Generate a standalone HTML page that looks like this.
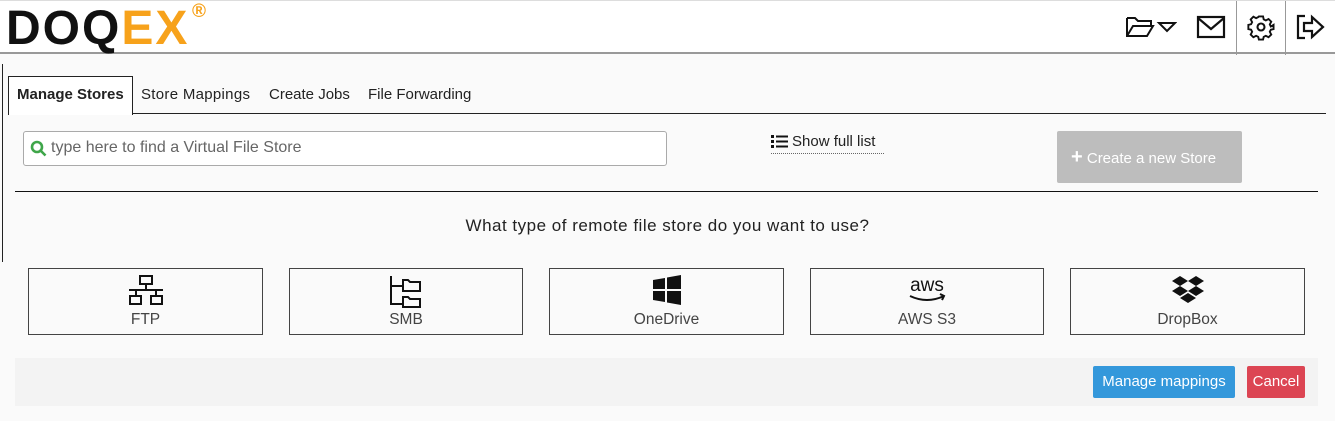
<!DOCTYPE html>
<html><head><style>
*{box-sizing:border-box;margin:0;padding:0}
body{width:1335px;height:421px;background:#fafafa;font-family:"Liberation Sans",sans-serif;color:#222;position:relative;overflow:hidden}
.hdr{position:absolute;left:0;top:0;width:1335px;height:54px;background:#fff;border-bottom:2px solid #999;border-top:1px solid #ddd}
.logo{position:absolute;left:6px;top:4px;font-weight:bold;font-size:48px;letter-spacing:2px;line-height:48px}
.abs{position:absolute}
.tab{position:absolute;top:86px;font-size:15px}
.card{position:absolute;top:268px;height:67px;border:1px solid #444;background:#fafafa;text-align:center;font-size:15.5px;color:#444}
.card span{position:absolute;left:0;right:0;top:42px}
.card svg{position:absolute;left:50%;transform:translateX(-50%);top:5px}
</style></head><body>
<div class="hdr">
 <div class="logo"><span style="color:#111">DOQ</span><span style="color:#f7a21b">EX</span></div>
 <div class="abs" style="left:192px;top:0px;color:#f7a21b;font-size:19px;font-weight:bold">®</div>
 <svg class="abs" style="left:1125px;top:13px" width="52" height="26" viewBox="0 0 52 26" fill="none" stroke="#111" stroke-width="2"><path d="M2 4h8l3 3h13v5M2 4v18h20l6-10H8L2 22"/><path d="M34 9h16l-8 8z" fill="none"/></svg>
 <svg class="abs" style="left:1196px;top:14px" width="30" height="24" viewBox="0 0 30 24" fill="none" stroke="#111" stroke-width="2.2"><rect x="2" y="2" width="26" height="20"/><path d="M2 3l13 11L28 3"/></svg>
 <div class="abs" style="left:1236px;top:0;width:50px;height:54px;border-left:1px solid #999;border-right:1px solid #999"></div>
 <svg class="abs" style="left:1247px;top:12px" width="28" height="28" viewBox="0 0 24 24" fill="none" stroke="#111" stroke-width="1.8"><circle cx="12" cy="12" r="3"/><path d="M10 2h4l.6 2.8 2 1 2.6-1.4 2.6 2.6-1.4 2.6 1 2L24 10v4l-2.6.6-1 2 1.4 2.6-2.6 2.6-2.6-1.4-2 1L14 24h-4l-.6-2.6-2-1-2.6 1.4-2.6-2.6 1.4-2.6-1-2L0 14v-4l2.6-.6 1-2-1.4-2.6 2.6-2.6 2.6 1.4 2-1z" transform="scale(.9) translate(1.3 1.3)"/></svg>
 <svg class="abs" style="left:1296px;top:13px" width="30" height="26" viewBox="0 0 30 26" fill="none" stroke="#111" stroke-width="2.2"><path d="M9 2H2v22h7"/><path d="M8 9h8V3l11 10-11 10v-6H8z"/></svg>
</div>
<div class="abs" style="left:2px;top:64px;width:1px;height:198px;background:#222"></div>
<div class="abs" style="left:8px;top:113px;width:1318px;height:1px;background:#222"></div>
<div class="abs" style="left:8px;top:76px;width:125px;height:39px;border:1px solid #222;border-bottom:none;background:#fff"></div>
<div class="tab" style="left:17px;font-weight:bold">Manage Stores</div>
<div class="tab" style="left:141px;letter-spacing:.3px">Store Mappings</div>
<div class="tab" style="left:269px">Create Jobs</div>
<div class="tab" style="left:368px">File Forwarding</div>
<div class="abs" style="left:23px;top:131px;width:644px;height:35px;border:1px solid #aaa;border-radius:3px;background:#fff"></div>
<svg class="abs" style="left:30px;top:140px" width="17" height="17" viewBox="0 0 17 17" fill="none" stroke="#3fa64a" stroke-width="2.6"><circle cx="7" cy="7" r="5"/><path d="M10.5 10.5l5 5"/></svg>
<div class="abs" style="left:51px;top:139px;font-size:16px;color:#666">type here to find a Virtual File Store</div>
<svg class="abs" style="left:771px;top:134px" width="18" height="14" viewBox="0 0 18 14" fill="#111"><rect x="0" y="1" width="3" height="3"/><rect x="0" y="6" width="3" height="3"/><rect x="0" y="11" width="3" height="3"/><rect x="5" y="1.5" width="12" height="2"/><rect x="5" y="6.5" width="12" height="2"/><rect x="5" y="11.5" width="12" height="2"/></svg>
<div class="abs" style="left:792px;top:133px;font-size:15px">Show full list</div>
<div class="abs" style="left:771px;top:153px;width:113px;border-top:1px dotted #666"></div>
<div class="abs" style="left:1057px;top:131px;width:185px;height:52px;background:#bdbdbd;border-radius:2px;color:#fff;font-size:15px;line-height:52px;padding-left:14px"><b style="font-size:20px">+</b> Create a new Store</div>
<div class="abs" style="left:15px;top:191px;width:1303px;height:1px;background:#111"></div>
<div class="abs" style="left:0;width:1335px;top:216px;text-align:center;font-size:17px;letter-spacing:.5px">What type of remote file store do you want to use?</div>
<div class="card" style="left:28px;width:235px"><svg width="40" height="32" viewBox="0 0 40 32" fill="none" stroke="#111" stroke-width="2"><rect x="14" y="2" width="12" height="8"/><path d="M20 10v6M3 16h34M10 16v6M30 16v6"/><rect x="4" y="22" width="11" height="8"/><rect x="25" y="22" width="11" height="8"/></svg><span>FTP</span></div>
<div class="card" style="left:289px;width:234px"><svg width="36" height="34" viewBox="0 0 36 34" fill="none" stroke="#111" stroke-width="2"><path d="M3 2v28h12M3 12h12"/><path d="M15 6h5l2 2h10v9H15z"/><path d="M15 23h5l2 2h10v8H15z"/></svg><span>SMB</span></div>
<div class="card" style="left:549px;width:235px"><svg width="32" height="32" viewBox="0 0 32 32" fill="#111"><path d="M2 6l12-2v11H2zM16 3.5L30 1v14H16zM2 17h12v11L2 26zM16 17h14v14l-14-2.5z"/></svg><span>OneDrive</span></div>
<div class="card" style="left:810px;width:234px"><svg width="44" height="32" viewBox="0 0 44 32"><text x="22" y="17" text-anchor="middle" font-family="Liberation Sans" font-size="19" fill="#111">aws</text><path d="M5 22q17 8 34 0" fill="none" stroke="#111" stroke-width="2"/><path d="M35 20l4 2-2 4" fill="none" stroke="#111" stroke-width="2"/></svg><span>AWS S3</span></div>
<div class="card" style="left:1070px;width:235px"><svg width="36" height="32" viewBox="0 0 36 32" fill="#111"><path d="M10 2l8 5-8 5-8-5zM26 2l8 5-8 5-8-5zM10 12l8 5-8 5-8-5zM26 12l8 5-8 5-8-5zM18 19l8 5-8 5-8-5z"/></svg><span>DropBox</span></div>
<div class="abs" style="left:15px;top:358px;width:1303px;height:48px;background:#f3f3f3"></div>
<div class="abs" style="left:1093px;top:366px;width:142px;height:32px;background:#3498db;border-radius:2px;color:#fff;font-size:15px;line-height:32px;text-align:center">Manage mappings</div>
<div class="abs" style="left:1247px;top:366px;width:58px;height:32px;background:#dc4553;border-radius:2px;color:#fff;font-size:15px;line-height:32px;text-align:center">Cancel</div>
</body></html>
